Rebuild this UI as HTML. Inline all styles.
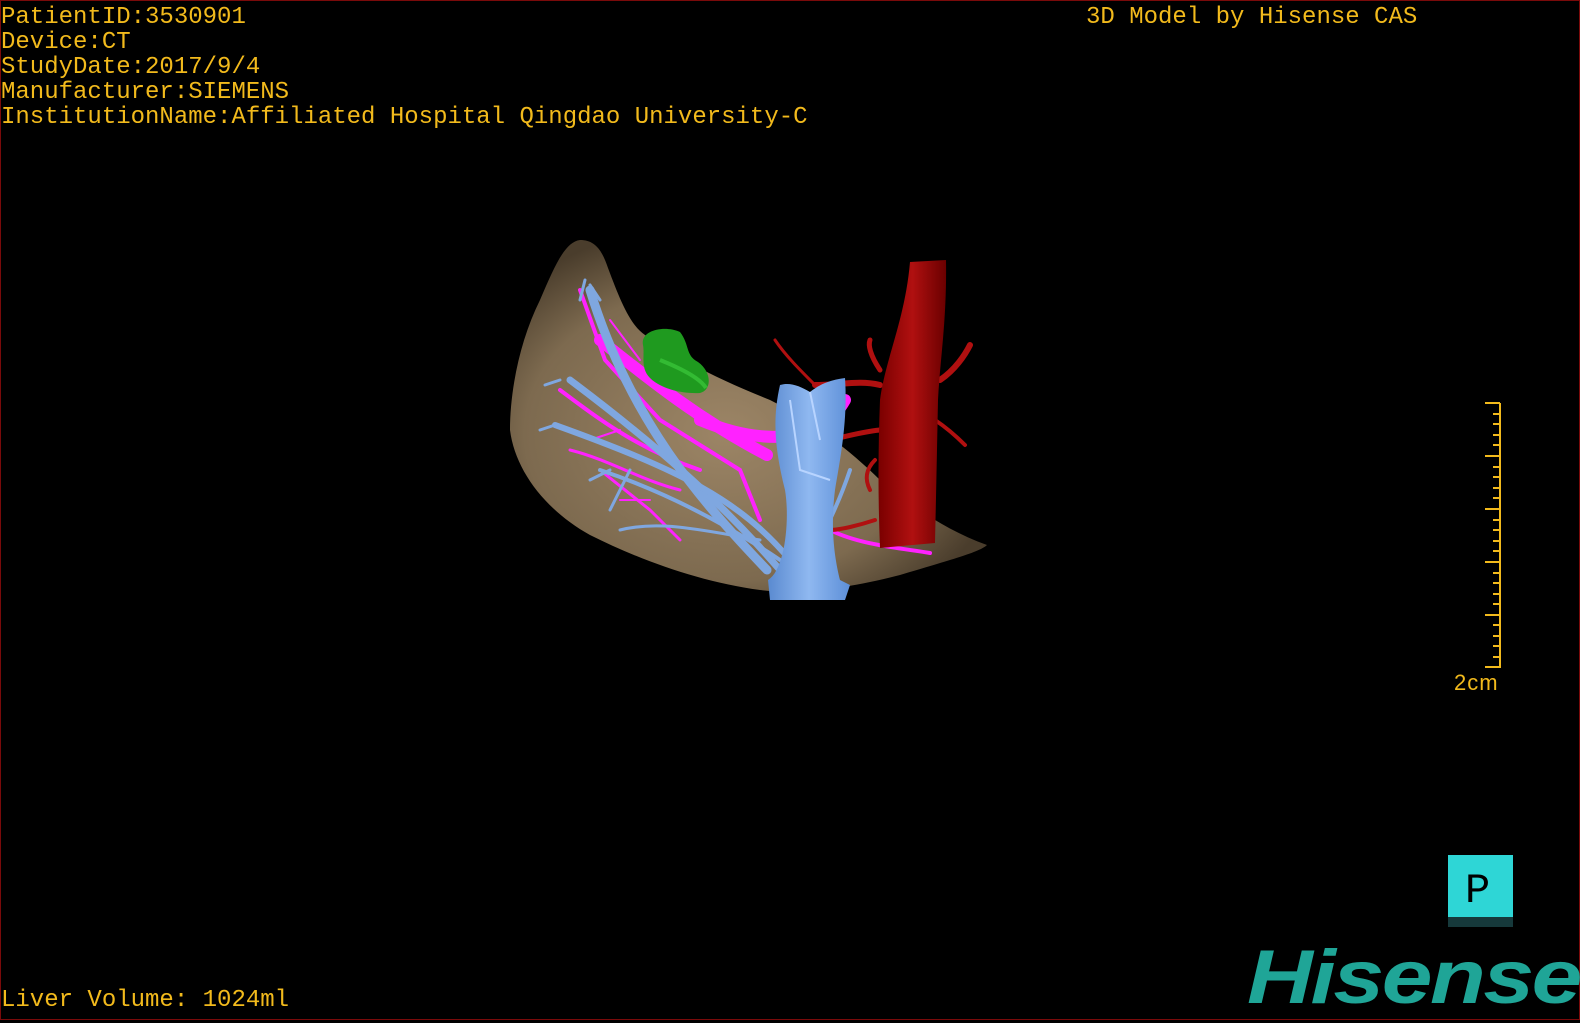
<!DOCTYPE html>
<html><head><meta charset="utf-8"><style>
html,body{margin:0;padding:0;background:#000;width:1580px;height:1020px;overflow:hidden}
#f{position:absolute;left:0;top:0;width:1578px;height:1018px;border:1px solid #7a0a0a}
.t{position:absolute;font-family:"Liberation Mono",monospace;font-size:24px;color:#f2ba1c;line-height:25px;white-space:pre;letter-spacing:0}
svg{position:absolute;left:0;top:0}
</style></head><body>
<div id="f"></div>
<svg width="1580" height="1020" viewBox="0 0 1580 1020">
<defs>
<radialGradient id="lv" cx="0.45" cy="0.55" r="0.6">
<stop offset="0" stop-color="#9c8566"/><stop offset="0.7" stop-color="#7d6a4f"/><stop offset="1" stop-color="#4a3d2c"/></radialGradient>
<linearGradient id="rd" x1="0" x2="1"><stop offset="0" stop-color="#7a0000"/><stop offset="0.5" stop-color="#b01010"/><stop offset="1" stop-color="#6a0000"/></linearGradient>
<linearGradient id="bl" x1="0" x2="1"><stop offset="0" stop-color="#5a8ad0"/><stop offset="0.5" stop-color="#8fb8f0"/><stop offset="1" stop-color="#5d8fd8"/></linearGradient>
</defs>
<path d="M580 240 C595 240 602 250 608 268 C620 300 630 325 645 335 C680 360 720 380 770 400 C810 420 850 450 880 480 C910 505 945 530 987 545 C980 552 950 560 900 575 C850 588 800 595 760 590 C700 582 640 560 590 535 C545 510 515 470 510 430 C510 390 520 340 540 300 C555 265 565 242 580 240Z" fill="url(#lv)"/>
<g stroke="#ff22ff" fill="none" stroke-linecap="round">
<path d="M600 340 C650 380 700 420 767 455" stroke-width="12"/>
<path d="M700 420 C760 445 820 445 845 400" stroke-width="12"/>
<path d="M580 290 L605 360 L660 420 L740 470 L760 520" stroke-width="4"/>
<path d="M560 390 C600 420 640 450 700 470" stroke-width="4"/>
<path d="M570 450 C610 460 640 480 680 490" stroke-width="3"/>
<path d="M600 470 L650 510 L680 540" stroke-width="3"/>
<path d="M830 530 C860 545 900 548 930 553" stroke-width="4"/>
<path d="M620 500 L650 500 M590 440 L620 430 M640 360 L610 320" stroke-width="2"/>
</g>
<g stroke="#7fa7e0" fill="none" stroke-linecap="round">
<path d="M767 570 C700 500 630 420 590 290" stroke-width="9"/>
<path d="M780 570 C720 500 650 440 570 380" stroke-width="7"/>
<path d="M790 560 C740 500 680 470 555 425" stroke-width="6"/>
<path d="M780 560 C720 520 660 490 600 470" stroke-width="4"/>
<path d="M760 540 C700 530 660 520 620 530" stroke-width="3"/>
<path d="M585 280 L580 300 M600 300 L590 285 M560 380 L545 385 M555 425 L540 430 M610 470 L590 480 M630 470 L610 510" stroke-width="3"/>
<path d="M810 560 C830 520 840 500 850 470" stroke-width="4"/>
</g>
<path d="M643 345 C640 330 665 325 680 332 C690 345 685 355 698 362 C712 372 712 390 700 393 C680 394 660 388 650 378 C640 368 645 355 643 345Z" fill="#1f9a1f"/>
<path d="M660 360 C680 368 700 378 706 388" stroke="#33bb33" stroke-width="4" fill="none"/>
<g stroke="#b01010" fill="none" stroke-linecap="round">
<path d="M880 385 C860 380 840 385 815 385" stroke-width="6"/>
<path d="M880 430 C860 432 840 438 830 440" stroke-width="5"/>
<path d="M940 380 C955 370 965 355 970 345" stroke-width="6"/>
<path d="M935 420 C950 430 960 440 965 445" stroke-width="4"/>
<path d="M880 370 C870 355 868 345 870 340" stroke-width="5"/>
<path d="M875 520 C860 525 840 530 830 530" stroke-width="4"/>
<path d="M815 385 C800 370 785 355 775 340" stroke-width="3"/>
<path d="M875 460 C865 470 865 480 870 490" stroke-width="4"/>
</g>
<path d="M910 262 L946 260 C947 320 940 360 938 400 C937 450 936 500 935 543 L880 548 C878 500 878 450 880 400 C885 360 905 320 910 262Z" fill="url(#rd)"/>
<path d="M780 385 C790 382 800 386 810 392 C820 384 830 380 845 378 C848 420 840 460 835 490 C830 530 835 560 840 580 L850 585 L845 600 L770 600 L768 580 C785 570 790 520 785 490 C775 450 772 420 780 385Z" fill="url(#bl)"/>
<path d="M790 400 L800 470 L830 480 M810 392 L820 440" stroke="#b8d4ff" stroke-width="2" fill="none"/>
<g stroke="#f2ba1c" stroke-width="2">
<line x1="1500" y1="403" x2="1500" y2="668"/>
<line x1="1485" y1="403" x2="1500" y2="403"/><line x1="1485" y1="456" x2="1500" y2="456"/><line x1="1485" y1="509" x2="1500" y2="509"/><line x1="1485" y1="562" x2="1500" y2="562"/><line x1="1485" y1="615" x2="1500" y2="615"/><line x1="1485" y1="667" x2="1500" y2="667"/>
<line x1="1493" y1="414" x2="1500" y2="414"/><line x1="1493" y1="424" x2="1500" y2="424"/><line x1="1493" y1="435" x2="1500" y2="435"/><line x1="1493" y1="445" x2="1500" y2="445"/>
<line x1="1493" y1="467" x2="1500" y2="467"/><line x1="1493" y1="477" x2="1500" y2="477"/><line x1="1493" y1="488" x2="1500" y2="488"/><line x1="1493" y1="498" x2="1500" y2="498"/>
<line x1="1493" y1="520" x2="1500" y2="520"/><line x1="1493" y1="530" x2="1500" y2="530"/><line x1="1493" y1="541" x2="1500" y2="541"/><line x1="1493" y1="551" x2="1500" y2="551"/>
<line x1="1493" y1="573" x2="1500" y2="573"/><line x1="1493" y1="583" x2="1500" y2="583"/><line x1="1493" y1="594" x2="1500" y2="594"/><line x1="1493" y1="604" x2="1500" y2="604"/>
<line x1="1493" y1="625" x2="1500" y2="625"/><line x1="1493" y1="636" x2="1500" y2="636"/><line x1="1493" y1="646" x2="1500" y2="646"/><line x1="1493" y1="657" x2="1500" y2="657"/>
</g>
<rect x="1448" y="855" width="65" height="62" fill="#2ed6d6"/>
<rect x="1448" y="917" width="65" height="10" fill="#16393b"/>
<text x="1465" y="902" font-family="Liberation Mono, monospace" font-size="42" fill="#000">P</text>
</svg>
<div class="t" style="left:1px;top:5px">PatientID:3530901
Device:CT
StudyDate:2017/9/4
Manufacturer:SIEMENS
InstitutionName:Affiliated Hospital Qingdao University-C</div>
<div class="t" style="left:1086px;top:5px">3D Model by Hisense CAS</div>
<div class="t" style="left:1px;top:988px">Liver Volume: 1024ml</div>
<div class="t" style="left:1454px;top:670px;font-size:22px;font-family:'Liberation Sans',sans-serif;letter-spacing:1px">2cm</div>
<div style="position:absolute;left:1247px;top:933px;font-family:'Liberation Sans',sans-serif;font-weight:bold;font-style:italic;font-size:76px;color:#1fa597;transform:scaleX(1.2);transform-origin:0 0;letter-spacing:-2px;line-height:90px">Hisense</div>
</body></html>
